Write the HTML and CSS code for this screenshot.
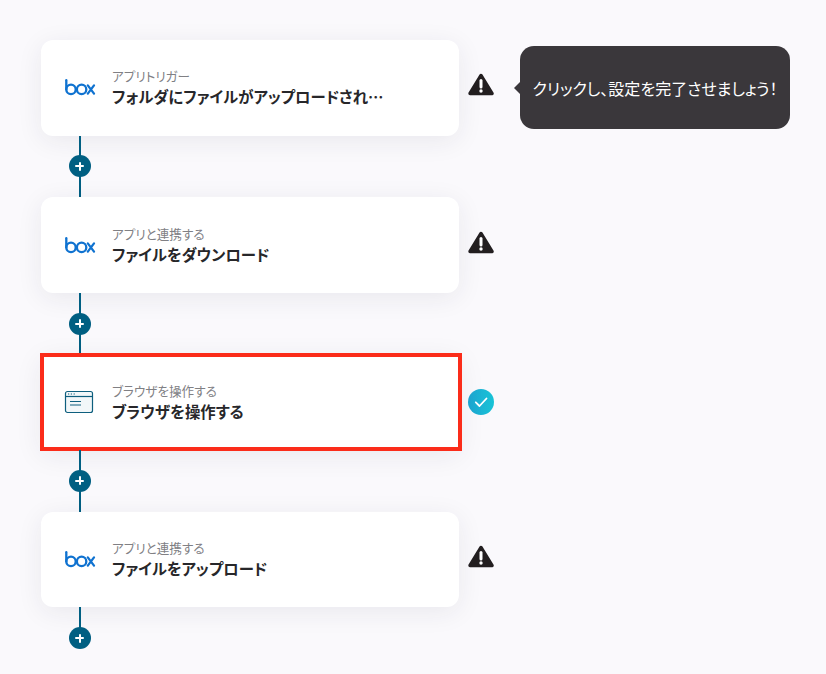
FILE: index.html
```html
<!DOCTYPE html>
<html lang="ja">
<head>
<meta charset="utf-8">
<title>フロー</title>
<link rel="stylesheet" href="styles.css">
</head>
<body>
<svg class="defs" width="0" height="0" aria-hidden="true">
  <defs>
    <symbol id="box" viewBox="0 0 31 17">
      <g fill="none" stroke="#0f72d0" stroke-width="2.3" stroke-linecap="round">
        <path d="M1.300 1.200V10.400"/>
        <circle cx="6" cy="10.400" r="4.700"/>
        <circle cx="16.600" cy="10.400" r="4.700"/>
        <path d="M22.800 6.400 29 14.600M29 6.400 22.800 14.600"/>
      </g>
    </symbol>
    <symbol id="warn" viewBox="0 0 26 23">
      <path d="M13 2.500 24 20.500H2Z" fill="#231f20" stroke="#231f20" stroke-width="3.400" stroke-linejoin="round"/>
      <path d="M13 7.500V14" stroke="#fff" stroke-width="3" stroke-linecap="round"/>
      <circle cx="13" cy="18" r="1.700" fill="#fff"/>
    </symbol>
  </defs>
</svg>
<main class="flow">
  <section class="step">
    <div class="card">
      <svg class="logo"><use href="#box"/></svg>
      <div class="text"><p class="kind">アプリトリガー</p><p class="title">フォルダにファイルがアップロードされ…</p></div>
    </div>
    <svg class="warn"><use href="#warn"/></svg>
    <div class="tip">クリックし、設定を完了させましょう！</div>
  </section>
  <div class="link"><span class="plus"></span></div>
  <section class="step">
    <div class="card">
      <svg class="logo"><use href="#box"/></svg>
      <div class="text"><p class="kind">アプリと連携する</p><p class="title">ファイルをダウンロード</p></div>
    </div>
    <svg class="warn"><use href="#warn"/></svg>
  </section>
  <div class="link"><span class="plus"></span></div>
  <section class="step">
    <div class="card marked">
      <svg class="browser" viewBox="0 0 30 24" fill="none">
        <rect x="1.500" y="1.500" width="27" height="21" rx="2" fill="#f2f7f9" stroke="#0e5f7e" stroke-width="1.200"/>
        <path d="M1.500 6.500H28.500" stroke="#0e5f7e" stroke-width="1.200"/>
        <path d="M4 4h1.200M6.800 4h1.200M9.600 4h1.200" stroke="#0e5f7e" stroke-width="1.200"/>
        <path d="M6 11.500H17M6 15H17" stroke="#0e5f7e" stroke-width="1.200"/>
      </svg>
      <div class="text"><p class="kind">ブラウザを操作する</p><p class="title">ブラウザを操作する</p></div>
    </div>
    <svg class="ok" viewBox="0 0 26 26">
      <defs><linearGradient id="okfill" x1="0" y1="0" x2="1" y2="0"><stop offset="0" stop-color="#1fa6d2"/><stop offset="1" stop-color="#17c3d6"/></linearGradient></defs>
      <circle cx="13" cy="13" r="13" fill="url(#okfill)"/>
      <path d="M7.800 13.300 11.500 17 18.500 9.500" fill="none" stroke="#fff" stroke-width="1.800" stroke-linecap="round" stroke-linejoin="round"/>
    </svg>
  </section>
  <div class="link"><span class="plus"></span></div>
  <section class="step">
    <div class="card">
      <svg class="logo"><use href="#box"/></svg>
      <div class="text"><p class="kind">アプリと連携する</p><p class="title">ファイルをアップロード</p></div>
    </div>
    <svg class="warn"><use href="#warn"/></svg>
  </section>
  <div class="link last"><span class="plus"></span></div>
</main>
</body>
</html>
```
FILE: styles.css
```css
* { box-sizing: border-box; }
html, body { margin: 0; height: 100%; }
body {
  background: #faf9fc;
  font-family: "Noto Sans CJK JP", "Noto Sans", sans-serif;
  font-feature-settings: "palt";
  overflow: hidden;
}
.defs { position: absolute; }
.flow {
  display: flex;
  flex-direction: column;
  padding: 40px 0 0 41px;
}
.step {
  position: relative;
  display: flex;
  align-items: center;
  height: 95.500px;
}
.card {
  position: relative;
  display: flex;
  align-items: center;
  width: 418px;
  height: 100%;
  padding-left: 24px;
  background: #fff;
  border-radius: 12px;
  box-shadow: 0 5px 26px rgba(40, 40, 70, 0.08);
}
.marked { border-radius: 0; }
.marked::after {
  content: "";
  position: absolute;
  inset: -2px -3px -1px -1px;
  border: 4px solid #fb2c1a;
}
.logo { width: 31px; height: 17px; flex: none; margin-right: 16px; }
.browser { width: 30px; height: 24px; flex: none; margin: 0 18px 0 -1px; }
.text { min-width: 0; padding-top: 0.400px; }
.kind {
  margin: 0 0 1px;
  font-size: 12.600px;
  line-height: 16px;
  color: #808084;
}
.title {
  margin: 0;
  font-size: 15.400px;
  line-height: 22px;
  font-weight: 700;
  color: #27272a;
  white-space: nowrap;
}
.warn { width: 26px; height: 23px; margin: -6px 0 0 9px; flex: none; }
.ok { width: 26px; height: 26px; margin-left: 9px; flex: none; }
.tip {
  position: absolute;
  left: 479px;
  top: 6px;
  width: 270px;
  height: 83px;
  display: flex;
  align-items: center;
  justify-content: center;
  background: #3a373b;
  border-radius: 14px;
  color: #fff;
  font-size: 16px;
  font-weight: 400;
  white-space: nowrap;
}
.tip::before {
  content: "";
  position: absolute;
  left: -6px;
  top: 36px;
  width: 0;
  height: 0;
  border-style: solid;
  border-width: 6px 6px 6px 0;
  border-color: transparent #3a373b transparent transparent;
}
.link {
  position: relative;
  width: 22px;
  margin-left: 27.500px;
  height: 61.800px;
  display: flex;
  align-items: center;
  justify-content: center;
}
.link::before {
  content: "";
  position: absolute;
  left: 10px;
  top: 0;
  bottom: 0;
  width: 2px;
  background: #005f82;
}
.link.last { height: 42px; align-items: flex-end; }
.link.last::before { bottom: 10px; }
.plus {
  position: relative;
  width: 22px;
  height: 22px;
  border-radius: 50%;
  background: #005f82;
}
.plus::before, .plus::after {
  content: "";
  position: absolute;
  background: #fff;
  border-radius: 1px;
}
.plus::before { left: 6.500px; top: 10px; width: 9px; height: 2px; }
.plus::after { left: 10px; top: 6.500px; width: 2px; height: 9px; }
```
